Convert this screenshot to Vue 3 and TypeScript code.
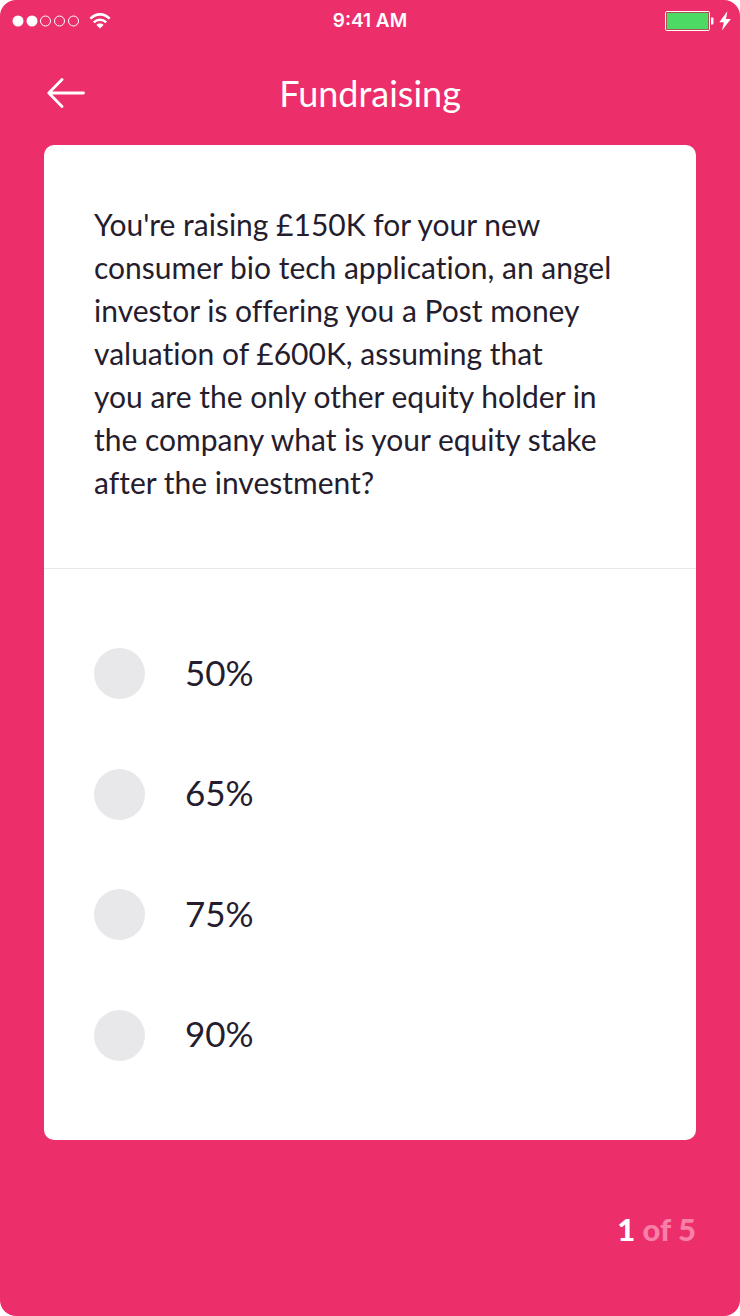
<script setup lang="ts">
import { ref } from 'vue'

const title = 'Fundraising'
const lines: string[] = [
  "You're raising £150K for your new",
  'consumer bio tech application, an angel',
  'investor is offering you a Post money',
  'valuation of £600K, assuming that',
  'you are the only other equity holder in',
  'the company what is your equity stake',
  'after the investment?',
]
const question = lines.join('\n')
const answers: string[] = ['50%', '65%', '75%', '90%']
const selected = ref<string>('')
const current = 1
const total = 5
</script>

<template>
  <div class="screen">
    <div class="status">
      <div class="signal">
        <svg width="68" height="12" viewBox="0 0 68 12" aria-hidden="true">
          <circle cx="6" cy="6" r="5.5" fill="#fff" />
          <circle cx="20" cy="6" r="5.5" fill="#fff" />
          <circle cx="33.5" cy="6" r="5" class="ring" />
          <circle cx="47.5" cy="6" r="5" class="ring" />
          <circle cx="61.5" cy="6" r="5" class="ring" />
        </svg>
        <svg width="22" height="16" viewBox="0 0 22 16" aria-hidden="true">
          <path d="M1.4 5.6C6.8-.1 15.2-.1 20.6 5.6" class="wave" />
          <path d="M4.8 9.3C8.3 5.8 13.7 5.8 17.2 9.3" class="wave" />
          <path d="M11 15.4 7.4 11.9C9.3 10 12.7 10 14.6 11.9Z" fill="#fff" />
        </svg>
      </div>
      <time class="clock">9:41 AM</time>
      <div class="power">
        <svg width="50" height="20" viewBox="0 0 50 20" aria-hidden="true">
          <rect x="0.5" y="0.5" width="44" height="19" rx="1.5" fill="none" stroke="#fff" />
          <rect x="1.5" y="1.5" width="42" height="17" fill="#4cd964" stroke="#a5574f" />
          <path d="M46 6.5h1.5a1 1 0 0 1 1 1v5a1 1 0 0 1-1 1H46Z" fill="#fff" />
        </svg>
        <svg width="12" height="20" viewBox="0 0 12 20" aria-hidden="true">
          <path d="M8.4.3.3 11.2h4.5L3 19.5 11.8 8H7Z" fill="#fff" />
        </svg>
      </div>
    </div>

    <header class="header">
      <button type="button" class="back" aria-label="Back">
        <svg width="38" height="30" viewBox="0 0 38 30" aria-hidden="true">
          <path d="M36.5 15H2M15 1.5 1.8 15 15 28.5" />
        </svg>
      </button>
      <h1 class="title">{{ title }}</h1>
    </header>

    <main class="card">
      <p id="question" class="question">{{ question }}</p>
      <div class="answers" role="radiogroup" aria-labelledby="question">
        <label v-for="answer in answers" :key="answer" class="answer">
          <input v-model="selected" type="radio" name="answer" :value="answer" class="radio" />
          <span class="value">{{ answer }}</span>
        </label>
      </div>
    </main>

    <footer class="progress">
      <strong class="current">{{ current }}</strong> of {{ total }}
    </footer>
  </div>
</template>

<style>
body {
  margin: 0;
  background: #fff;
}
</style>

<style scoped>
.screen {
  box-sizing: border-box;
  min-height: 100vh;
  display: flex;
  flex-direction: column;
  border-radius: 16px;
  background: #ec2e6b;
  color: #fff;
  font-family: Lato, "Open Sans", sans-serif;
  font-variant-ligatures: no-common-ligatures;
}
.status {
  display: grid;
  grid-template-columns: 1fr auto 1fr;
  align-items: center;
  height: 41px;
  padding: 0 9px;
}
.signal,
.power {
  display: flex;
  align-items: center;
}
.signal {
  gap: 9px;
  padding-left: 3px;
}
.power {
  justify-content: flex-end;
  gap: 4px;
}
.ring {
  fill: none;
  stroke: #fff;
}
.wave {
  fill: none;
  stroke: #fff;
  stroke-width: 2.6;
}
.clock {
  font: 600 19px/24px Inter, sans-serif;
}
.header {
  display: grid;
  grid-template-columns: 1fr auto 1fr;
  align-items: center;
  height: 104px;
  padding: 0 44px;
}
.back {
  justify-self: start;
  display: flex;
  padding: 0 3px;
  border: 0;
  background: none;
  cursor: pointer;
}
.back path {
  fill: none;
  stroke: #fff;
  stroke-width: 2.8;
  stroke-linecap: round;
  stroke-linejoin: round;
}
.title {
  margin: 0;
  font-size: 36px;
  line-height: 44px;
  font-weight: 400;
}
.card {
  flex: 1;
  display: flex;
  flex-direction: column;
  margin: 0 44px;
  border-radius: 10px;
  background: #fff;
  color: #251d2e;
}
.question {
  margin: 0;
  padding: 58px 0 64px 50px;
  border-bottom: 1px solid #e8e8ea;
  font-size: 30px;
  line-height: 43px;
  white-space: pre-line;
}
.answers {
  flex: 1;
  display: flex;
  flex-direction: column;
  justify-content: space-between;
  padding: 79px 50px;
}
.answer {
  display: flex;
  align-items: center;
  gap: 40px;
  font-size: 35px;
  line-height: 44px;
  cursor: pointer;
}
.value {
  padding-bottom: 4px;
}
.radio {
  appearance: none;
  width: 51px;
  height: 51px;
  margin: 0;
  border-radius: 50%;
  background: #e8e8ea;
  cursor: pointer;
}
.radio:checked {
  background: #ec2e6b;
}
.progress {
  padding: 67px 44px 65px;
  color: #f77fa8;
  font-size: 31px;
  line-height: 44px;
  font-weight: 900;
  text-align: right;
}
.current {
  color: #fff;
  font-weight: 900;
}
</style>
